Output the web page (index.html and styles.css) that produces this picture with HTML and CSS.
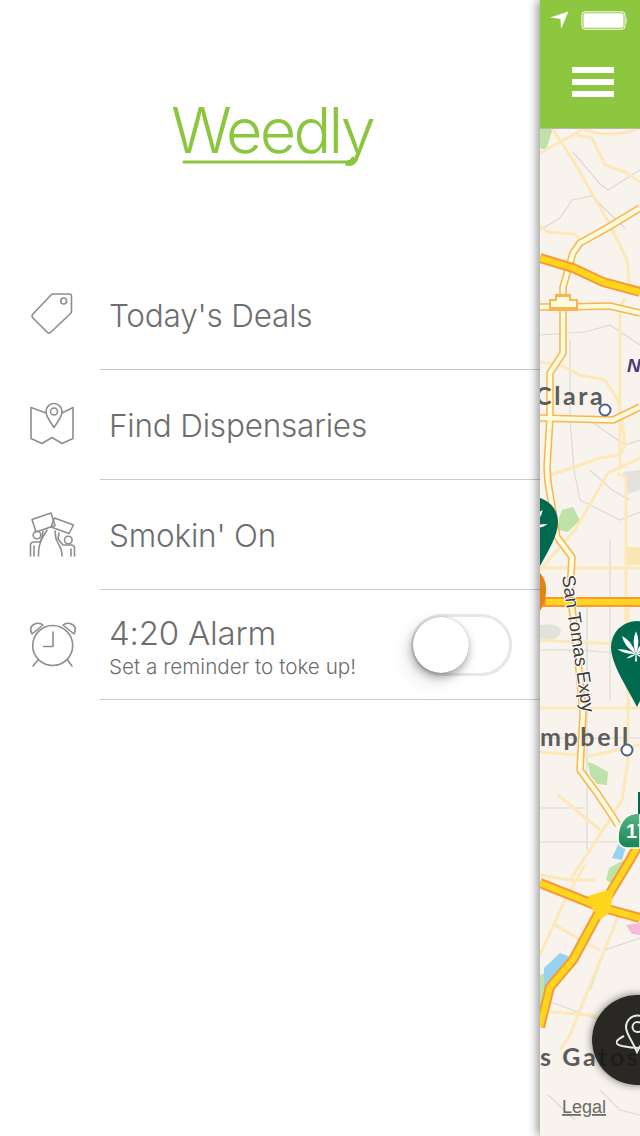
FILE: index.html
```html
<!DOCTYPE html>
<html lang="en">
<head>
<meta charset="utf-8">
<title>Weedly</title>
<link rel="stylesheet" href="styles.css">
</head>
<body>
<div class="app">
  <nav class="menu">
    <div class="brand">
      <div class="logo">
        <span class="logo-text">Weedly</span>
        <svg class="logo-line" width="200" height="20" viewBox="172 150 200 20"><path d="M185 162H347Q352 162 354 158" /></svg>
      </div>
    </div>
    <div class="row">
      <svg class="row-icon" width="100" height="110" viewBox="0 260 100 110">
        <path d="M53 294H69Q71.500 294 71.500 296V311Q71.500 312.500 70.500 313.500L50.500 332.500Q49 333.500 47.500 332.500L32.500 317.500Q31.500 316 32.500 314.500L51 295Q52 294 53 294Z"/>
        <circle cx="63.700" cy="301" r="3"/>
      </svg>
      <div class="row-body"><span class="label">Today's Deals</span></div>
    </div>
    <div class="row">
      <svg class="row-icon" width="100" height="110" viewBox="0 370 100 110">
        <path d="M46 413L31 407.500V438.500L42 443.500L52 437.500L62 443.500L73 438.500V407.500L62 413"/>
        <path d="M54 427.500C50 421 46 417 46 411.500A8 8 0 0 1 62 411.500C62 417 58 421 54 427.500Z"/>
        <circle cx="54" cy="411.500" r="3.500"/>
      </svg>
      <div class="row-body"><span class="label">Find Dispensaries</span></div>
    </div>
    <div class="row">
      <svg class="row-icon" width="100" height="110" viewBox="0 480 100 110">
        <path d="M32 519.500L51 513L55 525.500L36 532Z"/>
        <path d="M54.500 518L73.500 525L69 533.500L51 527Z"/>
        <circle cx="37" cy="535" r="3.800"/>
        <circle cx="68.300" cy="540" r="3.800"/>
        <path d="M30.500 556V545Q30.500 542 34 542H40L44 535L47 530"/>
        <path d="M43 531L42 537L40 544Q38.500 547 38.500 556"/>
        <path d="M34 556V546"/>
        <path d="M74.500 556V548Q74.500 545 71 545H63L58 539L59 533"/>
        <path d="M55 531L56 539L60 547Q62 550 62 556"/>
        <path d="M71 556V549"/>
      </svg>
      <div class="row-body"><span class="label">Smokin' On</span></div>
    </div>
    <div class="row">
      <svg class="row-icon" width="100" height="110" viewBox="0 590 100 110">
        <circle cx="52.700" cy="645.500" r="20"/>
        <path d="M53 632V646.500H43.500"/>
        <path d="M38 660L33 666M67.500 660L72 666"/>
        <path d="M32 634Q28 626 36 623.500Q40 622.500 43 625Z"/>
        <path d="M74 634Q78 626 70 623.500Q66 622.500 63 625Z"/>
      </svg>
      <div class="row-body alarm">
        <div class="alarm-text">
          <div class="label">4:20 Alarm</div>
          <div class="sublabel">Set a reminder to toke up!</div>
        </div>
        <div class="toggle"><div class="knob"></div></div>
      </div>
    </div>
  </nav>
  <main class="panel">
    <header class="bar">
      <div class="status">
        <svg width="20" height="18" viewBox="0 0 20 18" class="arrow"><path d="M0 6.500L18.500 0.500L11 18L10.500 8Z"/></svg>
        <svg width="46" height="20" viewBox="0 0 46 20" class="battery"><rect x="1" y="0.800" width="43" height="17.400" rx="3" class="batt-o"/><rect x="2.500" y="2.300" width="40" height="14.400" rx="1.500"/><path d="M45.500 6.500H46Q47 7 47 9.500Q47 12 46 12.500H45.500Z"/></svg>
      </div>
      <button class="burger" aria-label="Menu"><span></span><span></span><span></span></button>
    </header>
    <div class="map">
      <svg class="map-svg" width="100" height="1008" viewBox="540 128 100 1008">
        <defs>
          <g id="leaf">
            <path d="M0 0Q5 -14 0 -24Q-5 -14 0 0Z"/>
            <path d="M0 0Q5 -14 0 -24Q-5 -14 0 0Z" transform="rotate(38)"/>
            <path d="M0 0Q5 -14 0 -24Q-5 -14 0 0Z" transform="rotate(-38)"/>
            <path d="M0 0Q3 -10 0 -20Q-3 -10 0 0Z" transform="rotate(76)"/>
            <path d="M0 0Q3 -10 0 -20Q-3 -10 0 0Z" transform="rotate(-76)"/>
            <path d="M0 0Q2 -6 0 -11Q-2 -6 0 0Z" transform="rotate(115)"/>
            <path d="M0 0Q2 -6 0 -11Q-2 -6 0 0Z" transform="rotate(-115)"/>
            <path d="M-0.500 0H0.500L1 8H-1Z"/>
          </g>
          <linearGradient id="shield-fill" x1="0" y1="0" x2="0" y2="1">
            <stop offset="0" stop-color="#5cb585"/>
            <stop offset="1" stop-color="#178354"/>
          </linearGradient>
        </defs>
        <rect x="540" y="128" width="100" height="1008" class="land"/>

        <path class="park" d="M540 128H553L546 150L540 148Z"/>
        <path class="park" d="M562 510L573 507L580 520L568 532L559 530V518Z"/>
        <path class="park" d="M588 762L596 765L608 772L607 785L597 784L590 775Z"/>
        <path class="park" d="M609 868L628 858L626 874L615 885L606 880Z"/>
        <path class="park" d="M540 975L552 970L560 972L550 990L540 1010Z"/>
        <path class="water" d="M544 968L560 953L573 958L552 985L544 1008Z"/>
        <path class="water" d="M612 858L622 860L628 840L618 845Z"/>
        <path class="gray-area" d="M540 625Q560 622 561 632Q558 640 540 642Z"/>
        <path class="gray-area" d="M623 472L640 470V490L628 494Z"/>
        <rect class="tan" x="626" y="547" width="14" height="18"/>
        <path class="pink" d="M626 925L640 923V935L632 934Z"/>

        <g class="minor">
          <path d="M540 230L560 218L572 200L592 196L606 210L625 228"/>
          <path d="M573 152L600 184L608 190L640 170"/>
          <path d="M540 335L585 332L610 325L640 345"/>
          <path d="M570 340V420L574 470L580 500L620 520L640 512"/>
          <path d="M589 420L625 445L640 440"/>
          <path d="M590 470L612 490L630 500"/>
          <path d="M540 738H640"/>
          <path d="M540 650H585L600 652H640"/>
          <path d="M540 808H585"/>
          <path d="M540 842H640"/>
          <path d="M610 540V700M587 600V850"/>
          <path d="M545 1000L600 1020L610 1010L640 1005"/>
          <path d="M590 990L605 950L640 938"/>
          <path d="M548 1095L575 1120M600 1090L620 1110L640 1115"/>
        </g>

        <g class="road-pale">
          <path d="M540 153L582 130"/>
          <path d="M552 128L573 160L610 225L627 260L630 290"/>
          <path d="M580 128Q610 140 640 128"/>
          <path d="M577 135L592 138L605 165L625 172L640 182"/>
          <path d="M540 226L548 232L575 234L580 240"/>
          <path d="M625 298L620 307V340V470"/>
          <path d="M540 362L560 365L580 375L605 380L618 400L622 420L625 445L620 455L600 458L580 465L545 477"/>
          <path d="M640 458L608 473L575 530L540 570"/>
          <path d="M617 473L626 478L626 630"/>
          <path d="M540 568H640"/>
          <path d="M540 640Q590 643 640 645"/>
          <path d="M628 600V760L622 800L590 850L570 880"/>
          <path d="M540 708H640"/>
          <path d="M540 752L590 756L625 748L640 745"/>
          <path d="M558 795L600 830"/>
          <path d="M540 875L570 880L595 880"/>
          <path d="M540 955L565 900L585 865"/>
          <path d="M555 925L590 945L600 950"/>
          <path d="M620 912L590 985L570 1035L560 1050"/>
          <path d="M550 1012L590 1015L625 1020"/>
        </g>

        <g class="road-orange">
          <path d="M540 307L563 307L610 306L640 313"/>
          <path d="M640 208L607 228L580 243L573 253L563 287L563 353L550 373V417L547 467L548 482L557 537L572 557L570 590"/>
          <path d="M540 418L613 420L640 407"/>
          <path d="M578 660L583 713L580 770L597 793L613 817L618 825"/>
          <path d="M570 590L578 660"/>
        </g>
        <g class="road-orange-core">
          <path d="M540 307L563 307L610 306L640 313"/>
          <path d="M640 208L607 228L580 243L573 253L563 287L563 353L550 373V417L547 467L548 482L557 537L572 557L570 590"/>
          <path d="M540 418L613 420L640 407"/>
          <path d="M578 660L583 713L580 770L597 793L613 817L618 825"/>
          <path d="M570 590L578 660"/>
        </g>
        <path class="junction-o" d="M549 309V299H555V294H571V299H578V311H549Z"/>
        <path class="junction" d="M551 307V301H557V297H569V301H576V307Z"/>

        <g class="hw-o">
          <path d="M540 258L573 268L603 282L640 292"/>
          <path d="M540 602H640"/>
          <path d="M540 883L600 907L640 918"/>
          <path d="M640 842L630 860L610 893L600 910L573 960L550 987L540 1027"/>
        </g>
        <g class="hw-y">
          <path d="M540 258L573 268L603 282L640 292"/>
          <path d="M546 602H640"/>
          <path d="M540 883L600 907L640 918"/>
          <path d="M640 842L630 860L610 893L600 910L573 960L550 987L540 1027"/>
        </g>
        <path class="hub" d="M588 896L614 888L610 912L600 920L590 905Z"/>

        <text class="city" x="535" y="405">Clara</text>
        <text class="city" x="540" y="746">mpbell</text>
        <text class="city" x="540" y="1066">s Gatos</text>
        <text class="north" x="627" y="372">N</text>
        <text class="street" transform="translate(562 576) rotate(81.500)">San Tomas Expy</text>
        <text class="legal" x="562" y="1113">Legal</text>

        <circle class="poi" cx="605" cy="410" r="5.500"/>
        <circle class="poi" cx="627" cy="750" r="5.500"/>

        <path class="pin-orange" d="M540 573Q547 580 546 593Q545 603 540 611Z"/>
        <path class="pin" d="M533 497A25 25 0 0 1 558 522C558 538 545 555 536 574L533 576L520 540L533 497Z"/>
        <use href="#leaf" class="leaf" transform="translate(528 529)"/>
        <path class="pin" d="M637 621A26 26 0 0 1 663 647C663 665 645 690 637 707C629 690 611 665 611 647A26 26 0 0 1 637 621Z"/>
        <use href="#leaf" class="leaf" transform="translate(636 654) scale(.95)"/>

        <g class="shield">
          <path d="M618 838Q618 825 625 818Q630 813 640 813V848H626Q618 847 618 838Z"/>
          <text x="626" y="838">17</text>
        </g>
        <rect class="pin-bit" x="638" y="792" width="2" height="22"/>
      </svg>
      <button class="fab" aria-label="Locations">
        <svg width="48" height="60" viewBox="0 0 48 60"><path d="M8 26Q-6 33 6 36Q25 40 44 36"/><path d="M21 42C16 30 10 24 10 17A11.500 11.500 0 0 1 33 17C33 24 27 30 21 42Z"/><circle cx="21.500" cy="17" r="5"/></svg>
      </button>
    </div>
  </main>
</div>
</body>
</html>
```
FILE: styles.css
```css
* { box-sizing: border-box; }
html, body { margin: 0; padding: 0; background: #fff; }
body { font-family: Inter, "Liberation Sans", sans-serif; width: 640px; height: 1136px; overflow: hidden; }
.app { display: flex; width: 640px; height: 1136px; overflow: hidden; }

.menu { width: 540px; flex: none; background: #fff; }
.brand { height: 260px; display: flex; justify-content: center; padding-top: 92px; }
.logo { position: relative; height: 76px; margin-left: 4px; }
.logo-text { font-size: 63px; font-weight: 300; line-height: 76px; color: #8cc63f; letter-spacing: -2.800px; display: block; }
.logo-line { position: absolute; left: 0; top: 58px; overflow: visible; }
.logo-line path { fill: none; stroke: #8cc63f; stroke-width: 3; stroke-linecap: round; }

.row { display: flex; height: 110px; }
.row-icon { width: 100px; flex: none; }
.row-icon path, .row-icon circle { fill: none; stroke: #8e8e8e; stroke-width: 1.6; stroke-linejoin: round; stroke-linecap: round; }
.row-body { flex: 1; border-bottom: 1px solid #cbcbcb; padding-left: 9px; display: flex; align-items: center; padding-top: 3px; }
.label { font-size: 31.500px; font-weight: 300; color: #6e6e6e; line-height: 38px; letter-spacing: -0.200px; }
.alarm { justify-content: space-between; padding-right: 28px; padding-top: 0; }
.alarm .label { font-size: 33px; line-height: 40px; }
.alarm-text { margin-top: 5px; }
.sublabel { font-size: 20.700px; font-weight: 300; color: #6e6e6e; line-height: 28px; }
.toggle { width: 101px; height: 62px; border: 3px solid #e7e7e7; border-radius: 31px; background: #fff; flex: none; }
.knob { width: 56px; height: 56px; margin-left: -1px; border-radius: 50%; background: #fff; box-shadow: -1px 4px 10px rgba(0,0,0,.35), 0 0 1px rgba(0,0,0,.35), -8px 10px 20px rgba(0,0,0,.08); }

.panel { width: 100px; flex: none; display: flex; flex-direction: column; box-shadow: -3px 0 9px rgba(0,0,0,.4); position: relative; }
.bar { height: 128px; background: #8dc63f; display: flex; flex-direction: column; flex: none; }
.status { height: 40px; display: flex; align-items: flex-start; padding: 11px 0 0 10px; gap: 11px; }
.arrow { fill: #fff; }
.battery { fill: #fff; }
.batt-o { fill: none; stroke: #fff; stroke-width: 1; }
.burger { width: 42px; height: 30px; margin: 27px 0 0 32px; padding: 0; border: 0; background: none; display: flex; flex-direction: column; justify-content: space-between; }
.burger span { display: block; height: 6px; background: #fff; }

.map { position: relative; flex: 1; overflow: hidden; border-top: 1px solid #b7b7b7; }
.map-svg { display: block; margin-top: -1px; }
.land { fill: #f8f4ed; }
.park { fill: #bfe2a9; }
.water { fill: #97d3ee; }
.gray-area { fill: #e3e1dc; }
.tan { fill: #f8e6b4; }
.pink { fill: #f6b9d6; }
.minor path { fill: none; stroke: #dcdad6; stroke-width: 1.2; }
.road-pale path { fill: none; stroke: #fde8b8; stroke-width: 3; stroke-linejoin: round; }
.road-orange path { fill: none; stroke: #f7b450; stroke-width: 7.500; stroke-linejoin: round; }
.road-orange-core path { fill: none; stroke: #fffbdc; stroke-width: 4.500; stroke-linejoin: round; }
.junction { fill: #fffbdc; }
.junction-o { fill: #f7b450; }
.hw-o path { fill: none; stroke: #f69a37; stroke-width: 10; stroke-linejoin: round; }
.hw-y path { fill: none; stroke: #ffd51d; stroke-width: 6; stroke-linejoin: round; }
.hub { fill: #ffd51d; }
.city { font-family: Lato, "Liberation Sans", sans-serif; font-size: 25px; font-weight: 700; fill: #5d5c5b; letter-spacing: 2.600px; }
.north { font-family: "Liberation Sans", sans-serif; font-size: 19px; font-weight: 700; font-style: italic; fill: #4a3a78; }
.street { font-family: "Liberation Sans", sans-serif; font-size: 18.500px; font-weight: 400; fill: #3c3c3c; paint-order: stroke; stroke: #fff; stroke-width: 2; }
.legal { font-family: "Liberation Sans", sans-serif; font-size: 18px; font-weight: 400; fill: #6b6a68; text-decoration: underline; }
.poi { fill: #fff; stroke: #4b6386; stroke-width: 2; }
.pin { fill: #006a4e; }
.pin-orange { fill: #e5830f; }
.pin-bit { fill: #006a4e; }
.leaf { fill: #fff; }
.shield path { fill: url(#shield-fill); stroke: #fff; stroke-width: 1.500; }
.shield text { font-family: "Liberation Sans", sans-serif; font-size: 20px; font-weight: 700; fill: #fff; }

.fab { position: absolute; left: 52px; top: 866px; width: 90px; height: 90px; border-radius: 50%; border: 0; padding: 0 0 0 24px; background: rgba(26,24,22,.93); box-shadow: 0 0 8px rgba(0,0,0,.55); display: flex; align-items: center; justify-content: flex-start; }
.fab svg { flex: none; }
.fab path, .fab circle { fill: none; stroke: #e8e8e8; stroke-width: 2; }
```
